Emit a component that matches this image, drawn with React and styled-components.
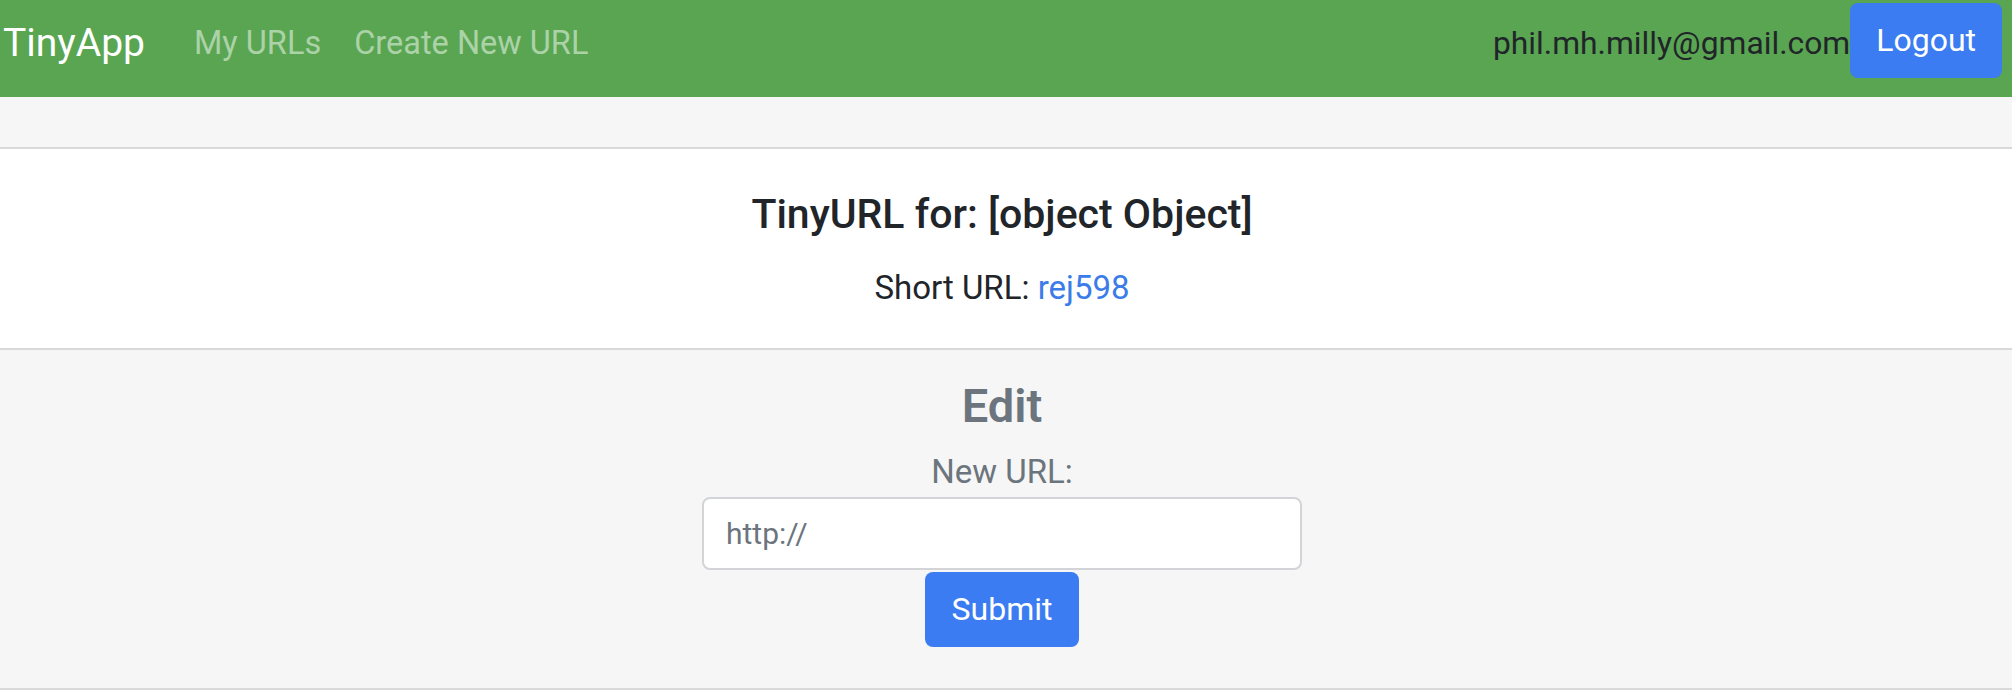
import React from 'react';
import styled, { createGlobalStyle } from 'styled-components';

const GlobalStyle = createGlobalStyle`
  html, body {
    margin: 0;
    padding: 0;
    background: #ffffff;
    font-family: Roboto, "Liberation Sans", Arial, sans-serif;
    color: #212529;
  }
`;

const Navbar = styled.nav`
  height: 97px;
  box-sizing: border-box;
  background: #59a552;
  padding: 3px 10px 0 3px;
  display: flex;
  align-items: flex-start;
`;

const NavRow = styled.div`
  flex: 1;
  height: 75px;
  display: flex;
  align-items: center;
`;

const Brand = styled.a`
  font-size: 39px;
  line-height: 1.2;
  padding-top: 5px;
  color: #ffffff;
  text-decoration: none;
  margin-right: 49px;
`;

const NavLinks = styled.div`
  display: flex;
  align-items: center;
  gap: 33px;
  padding-top: 5px;
`;

const NavLink = styled.a`
  font-size: 32.5px;
  line-height: 1.2;
  color: rgba(255, 255, 255, 0.5);
  text-decoration: none;
`;

const UserBox = styled.div`
  margin-left: auto;
  display: flex;
  align-items: center;
`;

const Email = styled.span`
  font-size: 31.8px;
  line-height: 1.2;
  padding-top: 5px;
  color: #212529;
`;

const Button = styled.button`
  font-family: inherit;
  font-size: 32px;
  line-height: 1.2;
  color: #ffffff;
  background: #3b7cf2;
  border: none;
  border-radius: 8px;
  height: 75px;
  padding: 0 ${({ $px }) => $px}px;
  cursor: pointer;
`;

const Page = styled.main`
  background: #f6f6f6;
  padding-top: 50px;
  border-bottom: 2px solid #dadada;
`;

const Card = styled.section`
  background: #ffffff;
  border-top: 2px solid #d9d9d9;
  border-bottom: 2px solid #d9d9d9;
  padding: 41px 8px 35px 0;
  display: flex;
  flex-direction: column;
  align-items: center;
`;

const Title = styled.h3`
  margin: 0 0 24px;
  font-size: 41px;
  line-height: 1.2;
  font-weight: 500;
  color: #212529;
`;

const ShortLine = styled.p`
  margin: 0;
  font-size: 33px;
  line-height: 1.5;
`;

const ShortLink = styled.a`
  color: #3b7ce9;
  text-decoration: none;
`;

const EditSection = styled.form`
  padding: 28px 8px 41px 0;
  display: flex;
  flex-direction: column;
  align-items: center;
`;

const EditTitle = styled.h4`
  margin: 0 0 13px;
  font-size: 47px;
  line-height: 1.2;
  font-weight: 600;
  color: #6c757d;
`;

const Label = styled.label`
  font-size: 33px;
  line-height: 1.5;
  color: #6c757d;
`;

const Input = styled.input`
  box-sizing: border-box;
  width: 600px;
  height: 73px;
  padding: 0 22px;
  font-family: inherit;
  font-size: 30px;
  color: #212529;
  background: #ffffff;
  border: 2px solid #d2d4d8;
  border-radius: 8px;
  outline: none;
  &::placeholder {
    color: #6c757d;
  }
`;

const SubmitButton = styled(Button)`
  margin-top: 2px;
`;

export default function App() {
  return (
    <>
      <GlobalStyle />
      <Navbar>
        <NavRow>
          <Brand href="#">TinyApp</Brand>
          <NavLinks>
            <NavLink href="#">My URLs</NavLink>
            <NavLink href="#">Create New URL</NavLink>
          </NavLinks>
          <UserBox>
            <Email>phil.mh.milly@gmail.com</Email>
            <Button $px={26}>Logout</Button>
          </UserBox>
        </NavRow>
      </Navbar>
      <Page>
        <Card>
          <Title>TinyURL for: [object Object]</Title>
          <ShortLine>
            Short URL: <ShortLink href="#">rej598</ShortLink>
          </ShortLine>
        </Card>
        <EditSection onSubmit={(e) => e.preventDefault()}>
          <EditTitle>Edit</EditTitle>
          <Label htmlFor="longURL">New URL:</Label>
          <Input id="longURL" type="text" placeholder="http://" />
          <SubmitButton type="submit" $px={27}>Submit</SubmitButton>
        </EditSection>
      </Page>
    </>
  );
}
